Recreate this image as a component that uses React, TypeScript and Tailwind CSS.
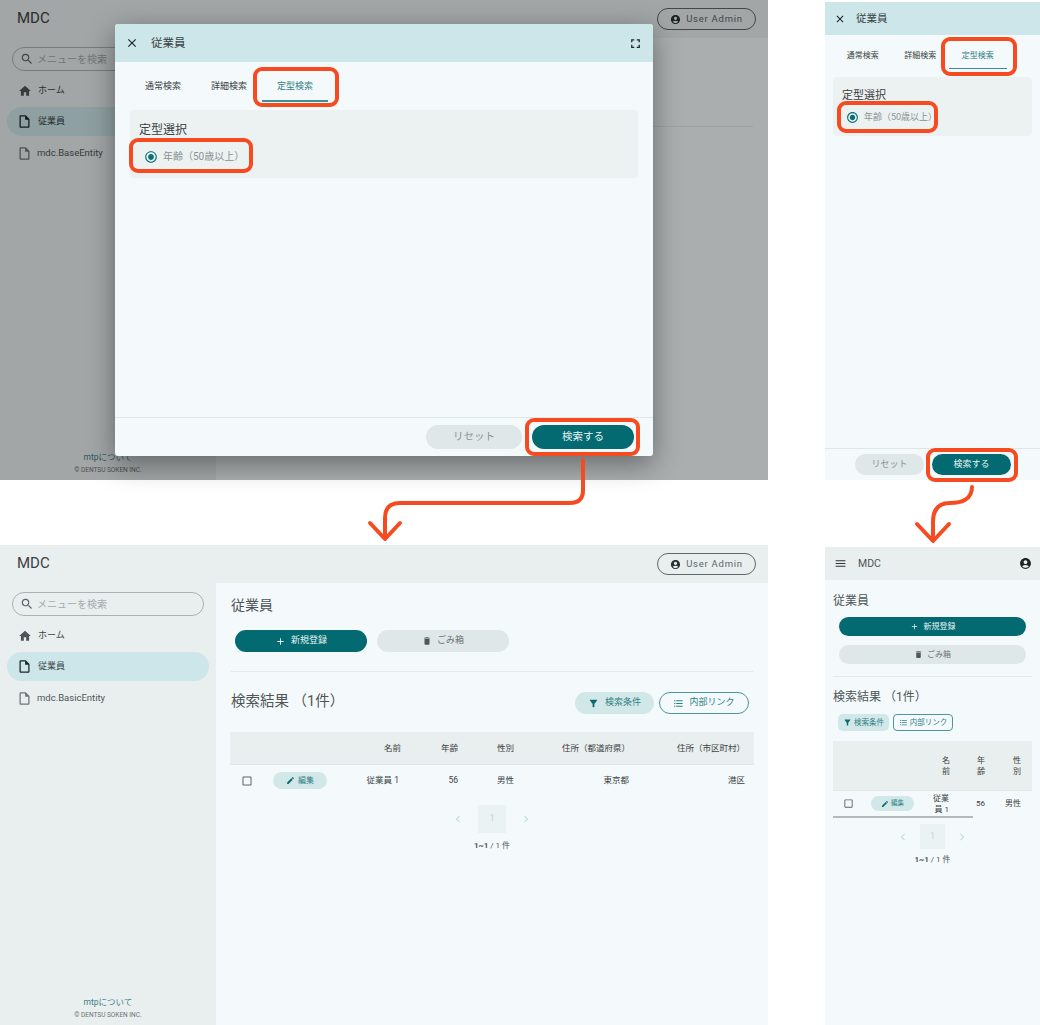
import type { ReactNode } from "react";
import {
  MdAccountCircle,
  MdAdd,
  MdCheckBoxOutlineBlank,
  MdChevronLeft,
  MdChevronRight,
  MdClose,
  MdDelete,
  MdEdit,
  MdFilterAlt,
  MdFormatListBulleted,
  MdFullscreen,
  MdHome,
  MdMenu,
  MdOutlineInsertDriveFile,
  MdRadioButtonChecked,
  MdSearch,
} from "react-icons/md";

const font = "font-['Roboto','Noto_Sans_CJK_JP',sans-serif]";

/* ── Orange callout round a control ── */
function Callout({ className }: { className: string }) {
  return (
    <div
      className={`absolute rounded-[9px] border-[4px] border-[#f64b20] ${className}`}
    />
  );
}

/* ── Left menu of the desktop screen ── */
function Sidebar({ entity }: { entity: string }) {
  return (
    <aside className="w-[216px] shrink-0 flex flex-col bg-[#e9eeee]">
      <div className="h-[38px] pl-[17px] pb-[2px] flex items-center text-[15px] text-[#3a4243]">
        MDC
      </div>
      <div className="mt-[9px] mx-[12px] h-[24px] rounded-full border border-[#aab2b3] flex items-center pl-[7px] gap-[3px] text-[10px] text-[#a3abac]">
        <MdSearch size={14} className="text-[#5d6667]" />
        メニューを検索
      </div>
      <div className="mt-[5px] flex flex-col text-[9px] text-[#3a4243]">
        <div className="h-[29px] flex items-center gap-[6px] pl-[18px] mb-[2px]">
          <MdHome size={14} className="text-[#4e5657]" />
          ホーム
        </div>
        <div className="h-[29px] mx-[7px] rounded-full bg-[#cde6e9] flex items-center gap-[6px] pl-[10px] mb-[3px]">
          <MdOutlineInsertDriveFile size={15} className="text-[#1c2526]" />
          従業員
        </div>
        <div className="h-[29px] flex items-center gap-[5px] pl-[17px] text-[9.5px] text-[#4e5657]">
          <MdOutlineInsertDriveFile size={15} className="text-[#6d7576]" />
          {entity}
        </div>
      </div>
      <div className="mt-auto pb-[4px] flex flex-col items-center">
        <span className="text-[8.5px] text-[#3f8088]">mtpについて</span>
        <span className="mt-[3px] text-[6.5px] text-[#6d7576]">
          © DENTSU SOKEN INC.
        </span>
      </div>
    </aside>
  );
}

/* ── Desktop frame: top bar and sidebar, main area passed in ── */
function DesktopShell({
  entity,
  children,
}: {
  entity: string;
  children: ReactNode;
}) {
  return (
    <div className="relative w-full h-full flex bg-[#f4f9fb]">
      <Sidebar entity={entity} />
      <div className="flex-1 flex flex-col min-w-0">
        <div className="h-[38px] shrink-0 bg-[#e9eeee] flex items-center justify-end pr-[12px]">
          <div className="w-[99px] h-[22px] rounded-full border border-[#5f6768] flex items-center justify-center gap-[5px] text-[9.5px] tracking-[0.08em] text-[#5d6667]">
            <MdAccountCircle size={11} className="text-[#2b3334]" />
            User Admin
          </div>
        </div>
        {children}
      </div>
    </div>
  );
}

/* ── Search dialog body, shared by desktop and mobile ── */
function SearchTabs({ tab, mobile }: { tab: string; mobile?: boolean }) {
  const names = ["通常検索", "詳細検索", "定型検索"];
  return (
    <div
      className={
        mobile
          ? "flex h-[35px] pl-[9px] pt-[7px]"
          : "flex h-[48px] pl-[15px] pt-[1px]"
      }
    >
      {names.map((name) => (
        <div
          key={name}
          className={`relative flex items-center justify-center ${
            mobile ? "w-[57.5px] text-[8px]" : "w-[66px] text-[9px]"
          } ${name === tab ? "text-[#2f7f86]" : "text-[#3a4243]"}`}
        >
          {name}
          {name === tab && (
            <span
              className={`absolute left-0 right-0 bg-[#3c8f96] ${
                mobile ? "bottom-[1px] h-[1.5px]" : "bottom-[8px] h-[2px]"
              }`}
            />
          )}
        </div>
      ))}
    </div>
  );
}

function PresetPanel({ mobile }: { mobile?: boolean }) {
  return (
    <div
      className={`rounded-[4px] bg-[#ecf1f1] ${
        mobile
          ? "mx-[8px] h-[59px] pl-[9px] pt-[11px]"
          : "mx-[15px] h-[68px] pl-[9px] pt-[11px]"
      }`}
    >
      <div
        className={`text-[#3a4243] ${
          mobile ? "text-[11px] leading-[16px]" : "text-[12px] leading-[18px]"
        }`}
      >
        定型選択
      </div>
      <div
        className={`flex items-center gap-[5px] text-[#8b9394] ${
          mobile ? "mt-[7px] pl-[4px] text-[9px]" : "mt-[10px] pl-[5px] text-[10px]"
        }`}
      >
        <MdRadioButtonChecked
          size={mobile ? 13 : 14}
          className="text-[#0b7076]"
        />
        年齢（50歳以上）
      </div>
    </div>
  );
}

function Pill({
  children,
  className,
}: {
  children: ReactNode;
  className: string;
}) {
  return (
    <div
      className={`rounded-full flex items-center justify-center ${className}`}
    >
      {children}
    </div>
  );
}

function Pager({ mobile }: { mobile?: boolean }) {
  return (
    <div className="flex flex-col items-center">
      <div
        className={`flex items-center text-[#c3dfe0] ${
          mobile ? "gap-[10px]" : "gap-[13px]"
        }`}
      >
        <MdChevronLeft size={14} />
        <div
          className={`bg-[#ebf2f3] flex items-center justify-center text-[9px] text-[#bcd6d8] ${
            mobile ? "w-[25px] h-[25px]" : "w-[28px] h-[28px]"
          }`}
        >
          1
        </div>
        <MdChevronRight size={14} />
      </div>
      <div
        className={`text-[8px] text-[#4e5657] ${
          mobile ? "mt-[5px]" : "mt-[7px]"
        }`}
      >
        <span className="font-bold">1~1</span> / 1 件
      </div>
    </div>
  );
}

/* ── Result page, desktop ── */
function ResultMain() {
  const cols =
    "grid grid-cols-[125px_50px_57px_56px_115px_116px] text-[8.5px] text-[#3a4243]";
  return (
    <main className="flex-1 px-[15px] pt-[14px]">
      <h1 className="text-[14px] leading-[16px] text-[#4e5657]">従業員</h1>
      <div className="mt-[17px] ml-[4px] flex gap-[10px] text-[9px]">
        <Pill className="w-[132px] h-[22px] gap-[5px] bg-[#026a70] text-[#e6f3f3]">
          <MdAdd size={11} />
          新規登録
        </Pill>
        <Pill className="w-[132px] h-[22px] gap-[5px] bg-[#dfe7e8] text-[#6d7576]">
          <MdDelete size={10} className="text-[#4e5657]" />
          ごみ箱
        </Pill>
      </div>
      <div className="mt-[19px] h-[1px] bg-[#e3e9ea]" />
      <div className="mt-[20px] h-[22px] flex items-center">
        <h2 className="-mt-[2px] text-[14.5px] text-[#4e5657]">
          検索結果 （1件）
        </h2>
        <Pill className="ml-auto w-[79px] h-[22px] gap-[6px] bg-[#d2e8e8] text-[9px] text-[#2f7f86]">
          <MdFilterAlt size={11} className="text-[#0b6a70]" />
          検索条件
        </Pill>
        <Pill className="ml-[5px] mr-[4px] w-[90px] h-[22px] gap-[5px] border border-[#4b979c] text-[9px] text-[#2f7f86]">
          <MdFormatListBulleted size={11} />
          内部リンク
        </Pill>
      </div>
      <div className="mt-[18px] -mx-[1px]">
        <div className={`${cols} h-[33px] items-center bg-[#e9eeee] border-b border-[#dfe6e6]`}>
          <span />
          <span className="text-right pr-[4px]">名前</span>
          <span className="text-right pr-[4px]">年齢</span>
          <span className="text-right pr-[4px]">性別</span>
          <span className="text-right pr-[3px]">住所（都道府県）</span>
          <span className="text-right pr-[4px]">住所（市区町村）</span>
        </div>
        <div className={`${cols} h-[31px] items-center`}>
          <div className="flex items-center pl-[11px] gap-[20px]">
            <MdCheckBoxOutlineBlank size={12} className="text-[#5d6667]" />
            <Pill className="w-[54px] h-[17px] gap-[3px] bg-[#d2e8e8] text-[8px] text-[#2f7f86]">
              <MdEdit size={9} className="text-[#0b6a70]" />
              編集
            </Pill>
          </div>
          <span className="text-right pr-[6px]">従業員 1</span>
          <span className="text-right pr-[4px]">56</span>
          <span className="text-right pr-[4px]">男性</span>
          <span className="text-right pr-[4px]">東京都</span>
          <span className="text-right pr-[4px]">港区</span>
        </div>
      </div>
      <div className="mt-[9px]">
        <Pager />
      </div>
    </main>
  );
}

/* ── Result page, mobile ── */
function MobileResult() {
  const cols = "grid grid-cols-[100px_20px_34px_34px] text-[8px] text-[#3a4243]";
  return (
    <div className={`w-full h-full flex flex-col bg-[#f4f9fb] ${font}`}>
      <div className="h-[33px] shrink-0 bg-[#e9eeee] flex items-center pl-[9px] pr-[8px]">
        <MdMenu size={13} className="text-[#2b3334]" />
        <span className="ml-[11px] text-[10.5px] text-[#4e5657]">MDC</span>
        <MdAccountCircle size={13} className="ml-auto text-[#1c2526]" />
      </div>
      <div className="px-[8px] flex-1 min-h-0">
        <h1 className="mt-[13px] text-[12px] leading-[16px] text-[#4e5657]">
          従業員
        </h1>
        <div className="mt-[8px] mx-[6px] flex flex-col gap-[9px] text-[8px]">
          <Pill className="h-[19px] gap-[5px] bg-[#026a70] text-[#e6f3f3]">
            <MdAdd size={9} />
            新規登録
          </Pill>
          <Pill className="h-[19px] gap-[4px] bg-[#dfe7e8] text-[#6d7576]">
            <MdDelete size={9} className="text-[#4e5657]" />
            ごみ箱
          </Pill>
        </div>
        <div className="mt-[12px] h-[1px] bg-[#e3e9ea]" />
        <h2 className="mt-[12px] text-[12px] leading-[16px] text-[#4e5657]">
          検索結果 （1件）
        </h2>
        <div className="mt-[9px] ml-[5px] flex gap-[4px] text-[7.5px]">
          <div className="w-[51px] h-[17px] rounded-[5px] bg-[#d2e8e8] flex items-center justify-center gap-[2px] text-[#2f7f86]">
            <MdFilterAlt size={9} className="text-[#0b6a70]" />
            検索条件
          </div>
          <div className="w-[60px] h-[17px] rounded-[4px] border border-[#4b979c] flex items-center justify-center gap-[2px] text-[#2f7f86]">
            <MdFormatListBulleted size={9} />
            内部リンク
          </div>
        </div>
        <div className="mt-[10px]">
          <div className={`${cols} h-[50px] items-center bg-[#e9eeee] border-b border-[#dfe6e6] leading-[11px]`}>
            <span />
            <span className="text-right pr-[3px]">
              名<br />前
            </span>
            <span className="text-right pr-[2px]">
              年<br />齢
            </span>
            <span className="text-right">
              性<br />別
            </span>
          </div>
          <div className={`${cols} h-[25px] items-center leading-[11px]`}>
            <div className="flex items-center pl-[10px] gap-[17px]">
              <MdCheckBoxOutlineBlank size={11} className="text-[#5d6667]" />
              <Pill className="w-[43px] h-[15px] gap-[2px] bg-[#d2e8e8] text-[6.5px] text-[#2f7f86]">
                <MdEdit size={8} className="text-[#0b6a70]" />
                編集
              </Pill>
            </div>
            <span className="-ml-[16px] text-right pr-[4px]">
              従業
              <br />員 1
            </span>
            <span className="text-right pr-[2px]">56</span>
            <span className="text-right">男性</span>
          </div>
          <div className="w-[140px] h-[2px] bg-[#b4baba]" />
        </div>
        <div className="mt-[6px]">
          <Pager mobile />
        </div>
      </div>
    </div>
  );
}

export default function App() {
  return (
    <div className={`relative w-[1040px] h-[1025px] overflow-hidden bg-white ${font}`}>
      {/* ── Desktop, search dialog open ── */}
      <section className="absolute left-0 top-0 w-[768px] h-[480px]">
        <DesktopShell entity="mdc.BaseEntity">
          <main className="flex-1 px-[15px]">
            <div className="mt-[88px] h-[1px] bg-[#e3e9ea]" />
          </main>
        </DesktopShell>
        <div className="absolute inset-0 bg-black/30" />
        <div className="absolute left-[115px] top-[24px] w-[538px] h-[432px] rounded-[3px] overflow-hidden bg-[#f4f9fb] flex flex-col shadow-[0_8px_28px_rgba(0,0,0,0.4)]">
          <div className="h-[38px] shrink-0 bg-[#cde6e9] flex items-center pl-[10px] pr-[10px]">
            <MdClose size={14} className="text-[#1c2526]" />
            <span className="ml-[12px] pt-[1px] text-[11.5px] text-[#3a4243]">
              従業員
            </span>
            <MdFullscreen size={15} className="ml-auto text-[#1c2526]" />
          </div>
          <SearchTabs tab="定型検索" />
          <PresetPanel />
          <div className="mt-auto h-[39px] border-t border-[#dfe6e6] flex items-center justify-end gap-[10px] pr-[19px] text-[10.5px]">
            <Pill className="w-[96px] h-[24px] bg-[#dfe7e8] text-[#8b9394]">
              リセット
            </Pill>
            <Pill className="w-[102px] h-[24px] bg-[#026a70] text-[#e6f3f3]">
              検索する
            </Pill>
          </div>
        </div>
      </section>

      {/* ── Mobile, search dialog ── */}
      <section className="absolute left-[825px] top-[2px] w-[215px] h-[478px] flex flex-col bg-[#f4f9fb]">
        <div className="h-[33px] shrink-0 bg-[#cde6e9] flex items-center pl-[9px]">
          <MdClose size={12} className="text-[#1c2526]" />
          <span className="ml-[10px] text-[10.5px] text-[#3a4243]">従業員</span>
        </div>
        <SearchTabs tab="定型検索" mobile />
        <div className="mt-[7px]">
          <PresetPanel mobile />
        </div>
        <div className="mt-auto h-[32px] border-t border-[#dfe6e6] flex items-center gap-[8px] pl-[30px] text-[9px]">
          <Pill className="w-[69px] h-[21px] bg-[#dfe7e8] text-[#8b9394]">
            リセット
          </Pill>
          <Pill className="w-[79px] h-[21px] bg-[#026a70] text-[#e6f3f3]">
            検索する
          </Pill>
        </div>
      </section>

      {/* ── Desktop, search result ── */}
      <section className="absolute left-0 top-[545px] w-[768px] h-[480px]">
        <DesktopShell entity="mdc.BasicEntity">
          <ResultMain />
        </DesktopShell>
      </section>

      {/* ── Mobile, search result ── */}
      <section className="absolute left-[825px] top-[547px] w-[215px] h-[478px]">
        <MobileResult />
      </section>

      {/* ── Callouts ── */}
      <Callout className="left-[253px] top-[67px] w-[86px] h-[40px]" />
      <Callout className="left-[129px] top-[138px] w-[124px] h-[35px]" />
      <Callout className="left-[525px] top-[418px] w-[115px] h-[38px]" />
      <Callout className="left-[941px] top-[37px] w-[76px] h-[39px]" />
      <Callout className="left-[837px] top-[101px] w-[101px] h-[32px]" />
      <Callout className="left-[926px] top-[448px] w-[92px] h-[34px]" />

      {/* ── Arrows ── */}
      <svg
        className="absolute left-0 top-0"
        width="1040"
        height="1025"
        fill="none"
        stroke="#f64b20"
        strokeWidth="4"
        strokeLinecap="round"
        strokeLinejoin="round"
      >
        <path d="M583 460 V490 Q583 503 570 503 H400 Q385 503 385 518 V538" />
        <path d="M370 523 L385 539 L400 523" />
        <path d="M972 487 C972 499 962 503 950 503 C938 503 933 510 933 522 V540" />
        <path d="M917 524 L933 541 L949 524" />
      </svg>
    </div>
  );
}
